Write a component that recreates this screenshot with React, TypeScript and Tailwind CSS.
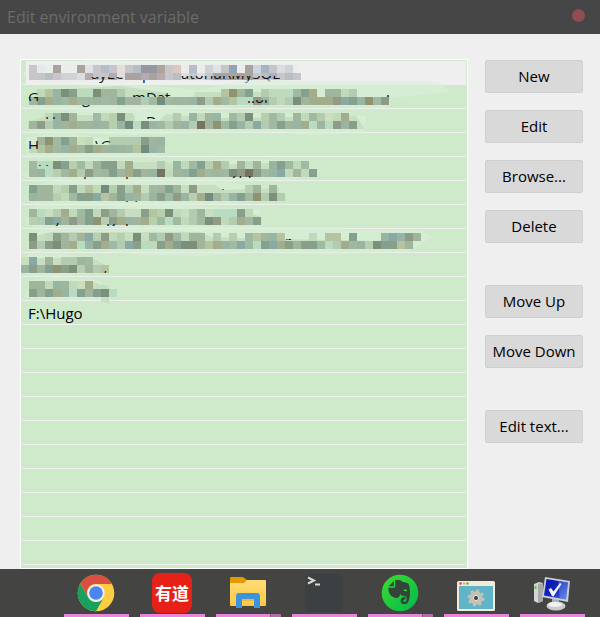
import React from "react";

type Fragment = { x: number; y: number; h: number; text: string };
type Entry = {
  top: string;
  bottom: string;
  start?: number;
  smear: string;
  cover: string;
  fragments: Fragment[];
};

const GREENS: Record<string, string> = {
  a: "#b2cbb1", b: "#a0b59c", c: "#8a9f8a", d: "#7c8f7a", f: "#8f9b86",
  g: "#cbdfba", h: "#b8cfaf", i: "#9fb9a2", j: "#98b5a3", k: "#84a08e",
  l: "#738c80", m: "#a3ad8b", n: "#b8dcc2", o: "#90936f", p: "#8aa9a5",
  q: "#bfd9ba", r: "#777362", s: "#b5c49f",
};

const GREYS: Record<string, string> = {
  a: "#c8c5cb", b: "#e2e8ee", c: "#a8a39f", d: "#dfe3e8", e: "#b5bdc6",
  f: "#c6c6c8", g: "#e2deda", h: "#9698a0", i: "#b0a496", j: "#dfc9bf",
  k: "#93a4b5", l: "#c9d5e0", m: "#d0d3d6", n: "#b4aab0", o: "#b9bec3",
  p: "#a8b2c0", q: "#dcdcdf",
};

const HIDDEN: Entry[] = [
  {
    top: "ab-c--cdaefgfehhiaj-e-mdfk-clpfqm",
    bottom: "ffoammqnffngccncnaoqaqacccccaopaof",
    smear: "M5 8L60 0L70-2L96-2L110 2L240 0L268 8L240 22L170 19L90 22L60 21L20 22L2 15Z",
    cover: "M7 3H276V13L252 15L205 13L180 18L146 14L128 18H100L72 14L66 20H7Z",
    fragments: [
      { x: 21, y: 19, h: 3, text: ":\\" },
      { x: 70, y: 16, h: 7, text: "ayEe" },
      { x: 121, y: 19, h: 3, text: "p" },
      { x: 160, y: 15, h: 8, text: "atorial\\MySQL" },
    ],
  },
  {
    top: "-qsjdkqndbba------------sobk-aqqnikm-bbqa",
    bottom: "bkmjimiibibkbbailibbjfamisnnfbaqadbmmmfpkjoif",
    smear: "M6 22L30 5L80 0H120L180 5L215-3L250-6L270-4H416L430 7L368 13L365 23L240 20L170 24L60 27L10 24Z",
    cover: "M22 5L100 1L145 8L155 19H80L12 20ZM174 7L240 7L250 20H170Z",
    fragments: [
      { x: 7, y: 6, h: 10, text: "G" },
      { x: 111, y: 7, h: 5, text: "mDat" },
      { x: 226, y: 15, h: 4, text: ":.or" },
      { x: 61, y: 20, h: 2, text: "g" },
      { x: 365, y: 8, h: 4, text: ";" },
    ],
  },
  {
    top: "--qjdb--iqhdq-----a-jqbj-iad-hia-bqiagqm",
    bottom: "bcajbmbbjbhjlndjiabjarboikjapaikbjmnbnfjc",
    smear: "M6 23L23 8L60 1H160L205 4L345 7L344 23L300 26H277L260 23L195 24L105 26L60 24L6 25Z",
    cover: "M29 6H114V20H7V13ZM145 5L190 9L335 7L344 20H130Z",
    fragments: [
      { x: 24, y: 6, h: 4, text: "H" },
      { x: 125, y: 6, h: 4, text: "D" },
    ],
  },
  {
    top: "-boikbgq--aaaacbj",
    bottom: "qsmijmbcmbjbislji",
    smear: "M5 5L23 1H55L95 7L132 4L144 20L130 24H55L5 25Z",
    cover: "M17 4H62L69 15L92 12L102 9H139V20H14Z",
    fragments: [
      { x: 7, y: 6, h: 10, text: "H" },
      { x: 74, y: 6, h: 5, text: "\\G" },
    ],
  },
  {
    top: "inndkhiqbkcqm---a-jqikhma-bqb-jkiqi",
    bottom: "bjnhimafibkbmcbjrqbjkmibidfrcijpqbqk",
    smear: "M0 18L22 5L60 1L150 6L200 2L270 3L295 15L278 22L210 25L150 24L100 27L16 25Z",
    cover: "M7 5H135L190 8L280 5V19H76L20 18Z",
    fragments: [
      { x: 18, y: 7, h: 2, text: "V" },
      { x: 62, y: 20, h: 2, text: "p" },
      { x: 104, y: 20, h: 2, text: "p" },
      { x: 210, y: 19, h: 2, text: "ypp" },
    ],
  },
  {
    top: "kbbqhcqsqlhcam-ibkb-f------hb-b",
    bottom: "jbbhqikcpsbkjbajcifjhmlbajkioada",
    smear: "M5 19L13 4L35 0L100 1L180 0L250 5L260 17L210 23L120 25L20 25Z",
    cover: "M9 4H194L201 9L258 7V18H130L94 15L60 20L7 19Z",
    fragments: [
      { x: 63, y: 18, h: 2, text: "sm" },
      { x: 104, y: 20, h: 1, text: "pp" },
      { x: 200, y: 6, h: 3, text: "i" },
    ],
  },
  {
    top: "bn-hmqikqcba--cshdq-ab-nnncq",
    bottom: "hakpbfbkohcmjbmhiniqaidfqamic",
    smear: "M4 17L14 1L80 3L125-3L190 2L238 4L240 22L200 26L150 25L80 22L12 22Z",
    cover: "M8 4H220L240 12V19H145L118 15L95 17L65 15L35 18L8 18Z",
    fragments: [
      { x: 33, y: 18, h: 3, text: "ysE" },
      { x: 86, y: 19, h: 2, text: "g" },
      { x: 104, y: 19, h: 2, text: "p" },
    ],
  },
  {
    top: "d-qcbabphfqh-d-iafiqbb-a-h-isbjs---q-ss-k---jpjfb",
    bottom: "facdbmnjcmiapcnqcmkddbsmjipinkpmcbckinamijhdkcsb",
    smear: "M5 16L20 0L80 2L130-2H325V1H400L412 8L386 23L337 24L315 26L230 24L180 27L120 26L70 21L12 23Z",
    cover: "M9 8L30 3H180L190 8L260 10L355 12L392 10L390 20H8Z",
    fragments: [{ x: 264, y: 10, h: 1, text: "r" }],
  },
  {
    top: "gp-b-aabi",
    bottom: "jcbkocdhbas",
    start: -1,
    smear: "M0 8L8 1H45L73 5L88 13L85 20L70 21L20 24L0 20Z",
    cover: "M0 5H72L86 13V19H0Z",
    fragments: [{ x: 83, y: 18, h: 3, text: ";" }],
  },
  {
    top: "bbqjbqgm-",
    bottom: "cbkmjnkbkdn",
    smear: "M3 20L10 3L30 0L75 3L94 12L88 24L78 23L12 22Z",
    cover: "M9 4H70L94 13V19H9ZM80 7L88 9V27L80 24Z",
    fragments: [],
  },
];

function Redaction({ entry, row }: { entry: Entry; row: number }) {
  const grey = row === 0;
  const palette = grey ? GREYS : GREENS;
  const start = entry.start ?? 0;
  return (
    <svg className="pointer-events-none absolute top-0 left-0 overflow-visible" width="440" height="24" aria-hidden="true">
      <path d={entry.smear} fill={grey ? "#e8eeea" : "#daeed8"} opacity="0.6" />
      <path d={entry.cover} fill={grey ? "#eaecea" : "#c3dabd"} opacity="0.8" />
      {[entry.top, entry.bottom].map((line, band) =>
        line.split("").map((key, i) =>
          key === "-" ? null : (
            <rect
              key={band + "-" + i}
              x={8 + (i + start) * 8}
              y={4 + band * 8}
              width="8"
              height={grey && band === 1 ? 7 : 8}
              fill={palette[key]}
            />
          ),
        ),
      )}
      {entry.fragments.map((f, i) => {
        const id = "strip-" + row + "-" + i;
        return (
          <g key={id}>
            <clipPath id={id}>
              <rect x={f.x - 2} y={f.y} width="120" height={f.h} />
            </clipPath>
            <text x={f.x} y="18" fontSize="15" fill="#111" clipPath={`url(#${id})`}>
              {f.text}
            </text>
          </g>
        );
      })}
    </svg>
  );
}

function PathList() {
  return (
    <ul className="relative z-10 min-w-0 flex-1 overflow-hidden border border-white bg-[#ceeacb] pt-px text-[15px] text-black">
      {Array.from({ length: 22 }, (_, i) => (
        <li key={i} className="relative mx-px h-6 border-b border-[#efefef]">
          {i === 0 && <div className="ml-1 h-full bg-[#efefef]" />}
          {i < 10 && (
            <div className="absolute top-0 -left-px">
              <Redaction entry={HIDDEN[i]} row={i} />
            </div>
          )}
          {i === 10 && <span className="block pl-1.5 leading-6">F:\Hugo</span>}
        </li>
      ))}
    </ul>
  );
}

function ActionButton({ children }: { children: React.ReactNode }) {
  return (
    <button
      type="button"
      className="h-[33px] w-full rounded-xs border border-[#d0d0d0] bg-[#d9d9d9] text-[15px] whitespace-nowrap text-black"
    >
      {children}
    </button>
  );
}

function Chrome() {
  return (
    <svg width="38" height="38" viewBox="0 0 38 38" aria-hidden="true">
      <circle cx="19" cy="19" r="18.3" fill="#ffcd41" />
      <path d="M3.2 9.8A18.3 18.3 0 0 1 34.9 10H19A9 9 0 0 0 11.2 23.5Z" fill="#d95043" />
      <path d="M3.2 9.8A18.3 18.3 0 0 0 19 37.3L26.8 23.5A9 9 0 0 1 11.2 23.5Z" fill="#17a05e" />
      <circle cx="19" cy="19" r="8.7" fill="#f1f1f1" />
      <circle cx="19" cy="19" r="6.8" fill="#4a86ed" />
    </svg>
  );
}

function Youdao() {
  return (
    <span className="flex size-10 items-center justify-center rounded-lg bg-[#e62117] font-['Noto_Sans_CJK_SC',sans-serif] text-[17px] font-bold text-white">
      有道
    </span>
  );
}

function Folder() {
  return (
    <svg width="38" height="38" viewBox="0 0 38 38" aria-hidden="true">
      <defs>
        <linearGradient id="folder" x2="0" y2="1">
          <stop stopColor="#ffdc76" />
          <stop offset="1" stopColor="#ffc844" />
        </linearGradient>
      </defs>
      <path d="M1 4Q1 3 2 3H14L18 6V10H1Z" fill="#e19a00" />
      <path d="M1 9H15L18 6H36Q37 6 37 7V31Q37 32 36 32H2Q1 32 1 31Z" fill="url(#folder)" />
      <path d="M7 34V22Q7 19 10 19H28Q31 19 31 22V34H25V25H13V34Z" fill="#3b94dc" />
      <path d="M13 25H25V27H13Z" fill="#e7a728" opacity=".55" />
    </svg>
  );
}

function Terminal() {
  return (
    <svg width="38" height="38" viewBox="0 0 38 38" aria-hidden="true">
      <rect width="38" height="38" rx="5" fill="#3b4043" />
      <path d="M3 3.5L9 6.5L3 9.5M10 10.5H15" fill="none" stroke="#ddd8cf" strokeWidth="2" />
    </svg>
  );
}

function Evernote() {
  return (
    <svg width="38" height="38" viewBox="0 0 38 38" aria-hidden="true">
      <defs>
        <linearGradient id="leaf" x2="1" y2="1">
          <stop stopColor="#3fdc2d" />
          <stop offset="1" stopColor="#00b84e" />
        </linearGradient>
      </defs>
      <circle cx="19" cy="19" r="18.3" fill="url(#leaf)" />
      <path
        d="M14.2 6.3C17.5 5.7 20.5 6.3 21.5 8C24.5 8 27.6 8.8 28.2 11.5C29.4 17 29.3 24 27.2 28C26 31 19.6 31.3 19.6 27C19.6 24 21.6 22.8 24.3 23.1V25.5C22.6 25.2 21.9 26 22.3 27.2C23.3 28.4 25.4 27.8 25.6 25.4C25.8 22.5 24 21.9 21.4 21.7C20.2 21.5 19.7 20.8 19.3 20C18.8 22.8 17.3 24 15.2 23.9C9.5 23.6 7.4 18.5 7.3 13.8H12.5C13.8 13.8 14.2 13.2 14.2 12Z"
        fill="#35443a"
      />
      <path d="M12.8 7L7.8 12.3H11.8C12.5 12.3 12.8 12 12.8 11.4Z" fill="#35443a" />
      <path d="M22.5 17C22.8 14.6 26 14.8 26.2 17.6C25 16.9 23.8 16.8 22.5 17Z" fill="#2fce38" />
    </svg>
  );
}

function SettingsWindow() {
  return (
    <svg width="38" height="38" viewBox="0 0 38 38" aria-hidden="true">
      <rect y="7" width="38" height="30" rx="1.5" fill="#f2ebd9" />
      <rect x="2" y="12" width="34" height="23" fill="#5fb5c7" />
      <circle cx="3.5" cy="9.5" r="1.3" fill="#e44848" />
      <circle cx="7" cy="9.5" r="1.3" fill="#e8b73a" />
      <circle cx="10.5" cy="9.5" r="1.3" fill="#3dba9a" />
      <circle cx="19" cy="24" r="4.7" fill="none" stroke="#c6c1b5" strokeWidth="4" />
      <circle cx="19" cy="24" r="7.3" fill="none" stroke="#c6c1b5" strokeWidth="2.4" strokeDasharray="2.9 2.83" />
      <circle cx="19" cy="24" r="2.6" fill="#454545" stroke="#eee8da" />
    </svg>
  );
}

function Computer() {
  return (
    <svg width="38" height="38" viewBox="0 0 38 38" aria-hidden="true">
      <defs>
        <linearGradient id="screen" x2="1" y2="1">
          <stop stopColor="#0715a8" />
          <stop offset=".55" stopColor="#1026c4" />
          <stop offset="1" stopColor="#5a83e8" />
        </linearGradient>
      </defs>
      <path d="M1 10L6 8L10 9V27L5 29L1 27Z" fill="#d4d6d5" />
      <path d="M5 10L10 9V27L5 29Z" fill="#a7aaa9" />
      <path d="M2.5 12V15" stroke="#67c92b" strokeWidth="2" />
      <path d="M19 25H26V31H19Z" fill="#aaaead" />
      <ellipse cx="23" cy="32" rx="9.5" ry="4.5" fill="#c9cccb" />
      <ellipse cx="22" cy="30.5" rx="7" ry="2.5" fill="#f1f1f1" />
      <path d="M12 3L37 7L35 28L9 23Z" fill="#c8ced3" />
      <path d="M13.5 5L35 8.5L33 25.5L11 21.5Z" fill="url(#screen)" />
      <path d="M25 7L35 8.5L33 25.5L27 24.5Z" fill="#7b9be2" opacity=".45" />
      <path d="M15.5 15.5L18 14L20.5 17.5L27 9L28.5 10L20.5 22.5L19 22Z" fill="#f5f5f5" />
    </svg>
  );
}

const APPS = [
  { name: "Chrome", icon: <Chrome /> },
  { name: "Youdao", icon: <Youdao /> },
  { name: "File Explorer", icon: <Folder />, stacked: true },
  { name: "Terminal", icon: <Terminal /> },
  { name: "Evernote", icon: <Evernote />, stacked: true },
  { name: "Settings", icon: <SettingsWindow /> },
  { name: "System", icon: <Computer /> },
];

export default function App() {
  return (
    <div className="flex h-screen flex-col overflow-hidden bg-[#efefef] font-['Open_Sans','Noto_Sans',sans-serif]">
      <header className="flex h-[34px] shrink-0 items-center justify-between bg-[#464646] pr-[15px] pl-[7px]">
        <h1 className="text-base text-[#6b6b6b]">Edit environment variable</h1>
        <button type="button" aria-label="Close" className="mb-1 size-[13px] rounded-full bg-[#924b50]" />
      </header>

      <main className="flex min-h-0 flex-1 gap-[17px] pt-[25px] pr-[17px] pl-5">
        <PathList />
        <div className="flex w-[98px] shrink-0 flex-col gap-[42px] pt-px">
          <div className="flex flex-col gap-[17px]">
            <ActionButton>New</ActionButton>
            <ActionButton>Edit</ActionButton>
            <ActionButton>Browse...</ActionButton>
            <ActionButton>Delete</ActionButton>
          </div>
          <div className="flex flex-col gap-[17px]">
            <ActionButton>Move Up</ActionButton>
            <ActionButton>Move Down</ActionButton>
          </div>
          <ActionButton>Edit text...</ActionButton>
        </div>
      </main>

      <nav aria-label="Taskbar" className="flex h-12 shrink-0 gap-[11px] bg-[#444443] pl-16">
        {APPS.map((app) => (
          <button key={app.name} type="button" aria-label={app.name} className="flex w-[65px] shrink-0 flex-col">
            <span className="flex h-[45px] w-full items-center justify-center pt-[3px] pr-px">{app.icon}</span>
            <span className="flex h-[3px] w-full bg-[#e886db]">
              {app.stacked && <span className="ml-auto h-full w-[11px] border-l border-[#8d5688] bg-[#b36dab]" />}
            </span>
          </button>
        ))}
      </nav>
    </div>
  );
}
